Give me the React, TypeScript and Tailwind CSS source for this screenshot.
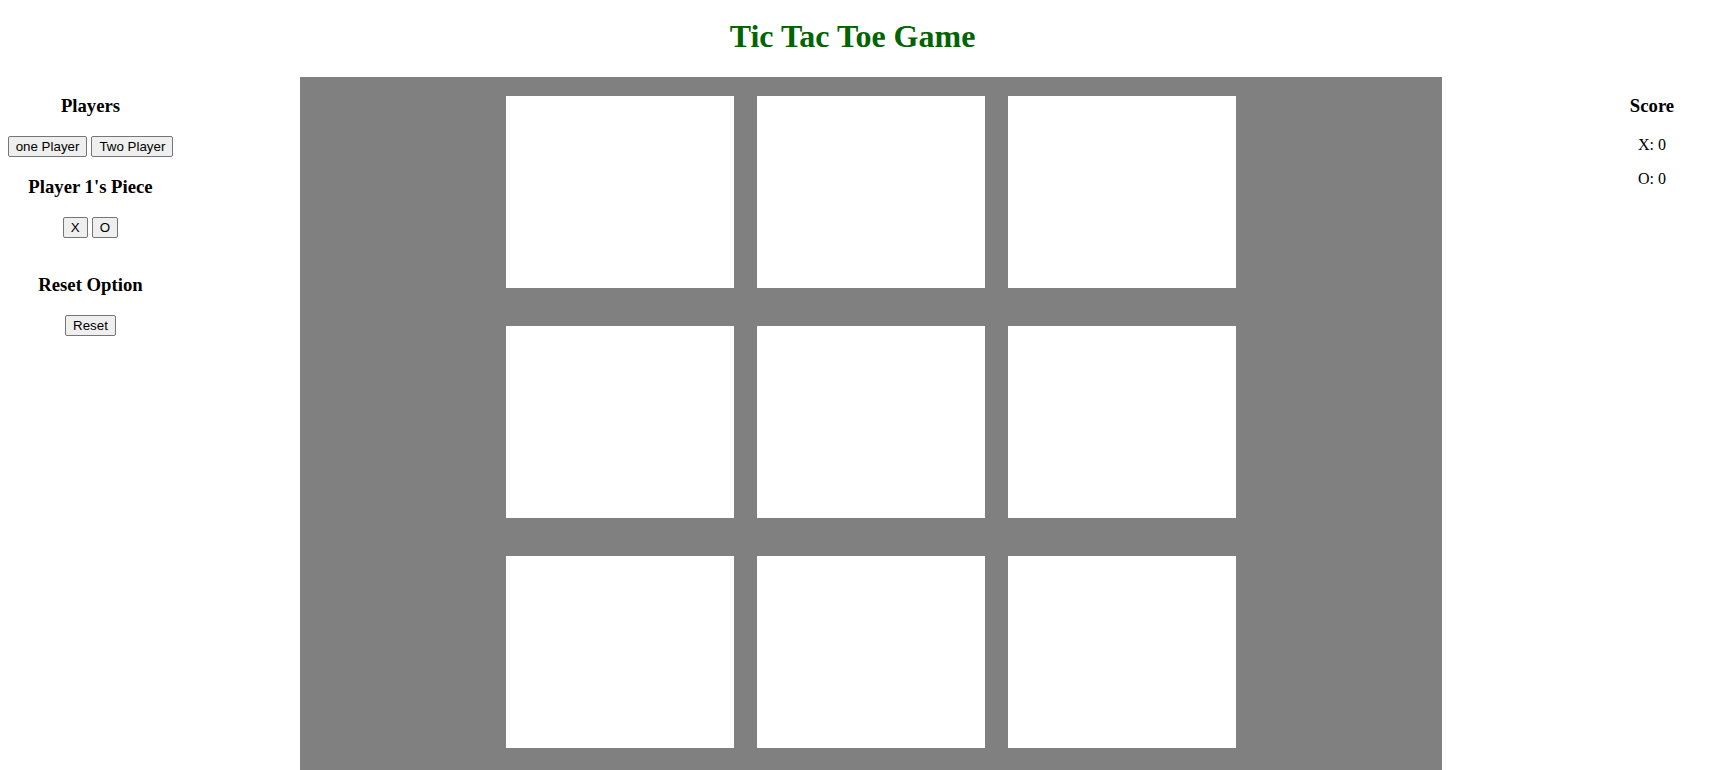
import React, { useState } from 'react';

type Cell = 'X' | 'O' | null;

const serif = "font-['Liberation_Serif','Times_New_Roman',serif]";
const btn =
  "h-[21px] px-[7px] bg-[#efefef] border border-[#767676] rounded-[2px] text-[13.33px] leading-[15px] text-black font-['Liberation_Sans',Arial,sans-serif] hover:bg-[#e5e5e5]";

const App: React.FC = () => {
  const [board, setBoard] = useState<Cell[]>(Array(9).fill(null));
  const [piece, setPiece] = useState<'X' | 'O'>('X');
  const [turn, setTurn] = useState<'X' | 'O'>('X');
  const [score] = useState({ X: 0, O: 0 });

  const play = (i: number) => {
    if (board[i]) return;
    const next = [...board];
    next[i] = turn;
    setBoard(next);
    setTurn(turn === 'X' ? 'O' : 'X');
  };

  const reset = () => {
    setBoard(Array(9).fill(null));
    setTurn(piece);
  };

  return (
    <div className={`w-full min-h-screen bg-white text-black ${serif}`}>
      {/* --- TITLE --- */}
      <h1 className="pt-[16px] pb-[21px] pr-[22px] text-center text-[32px] leading-[40px] font-bold text-[#006400]">
        Tic Tac Toe Game
      </h1>

      <div className="flex items-start">
        {/* --- LEFT: options --- */}
        <div className="w-[181px] flex flex-col items-center">
          <h3 className="mt-[18px] text-[18.72px] leading-[22px] font-bold">Players</h3>
          <div className="mt-[19px] flex gap-[4px]">
            <button className={btn}>one Player</button>
            <button className={btn}>Two Player</button>
          </div>
          <h3 className="mt-[19px] text-[18.72px] leading-[22px] font-bold">Player 1's Piece</h3>
          <div className="mt-[19px] flex gap-[4px]">
            <button className={btn} onClick={() => { setPiece('X'); setTurn('X'); }}>X</button>
            <button className={btn} onClick={() => { setPiece('O'); setTurn('O'); }}>O</button>
          </div>
          <h3 className="mt-[36px] text-[18.72px] leading-[22px] font-bold">Reset Option</h3>
          <div className="mt-[17px]">
            <button className={btn} onClick={reset}>Reset</button>
          </div>
        </div>

        {/* --- BOARD --- */}
        <div className="ml-[119px] w-[1142px] bg-[#808080] pt-[19px] pb-[30px] flex justify-center">
          <div className="grid grid-cols-[228px_228px_228px] grid-rows-[192px_192px_192px] gap-x-[23px] gap-y-[38px]">
            {board.map((c, i) => (
              <div
                key={i}
                onClick={() => play(i)}
                className="bg-white flex items-center justify-center text-[96px] font-bold text-black cursor-pointer"
              >
                {c}
              </div>
            ))}
          </div>
        </div>

        {/* --- RIGHT: score --- */}
        <div className="flex-1 flex justify-end">
          <div className="w-[150px] flex flex-col items-center">
            <h3 className="mt-[18px] text-[18.72px] leading-[22px] font-bold">Score</h3>
            <p className="mt-[19px] text-[16px] leading-[18px]">X: {score.X}</p>
            <p className="mt-[16px] text-[16px] leading-[18px]">O: {score.O}</p>
          </div>
        </div>
      </div>
    </div>
  );
};

export default App;
